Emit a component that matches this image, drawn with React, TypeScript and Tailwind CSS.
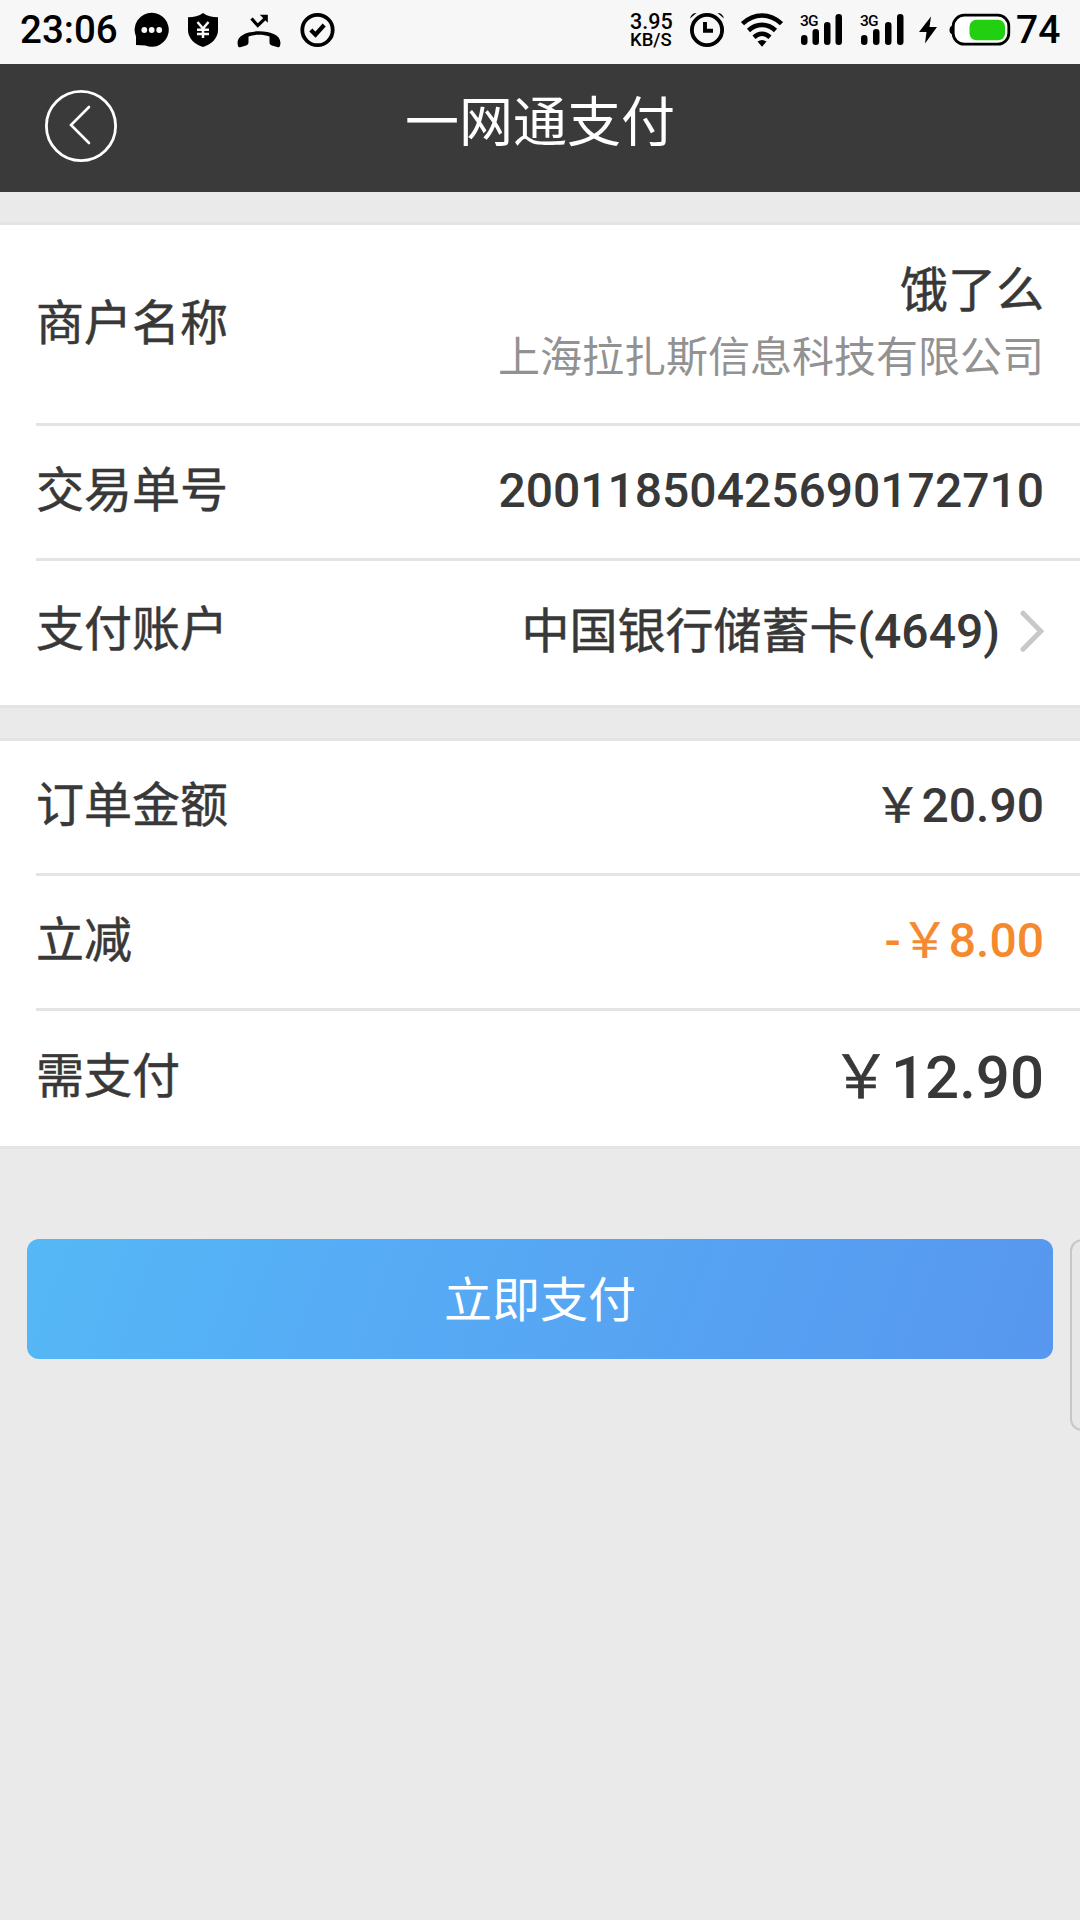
import { ReactNode } from "react";

function ChatIcon() {
  return (
    <svg width="36" height="36" viewBox="0 0 36 36">
      <path d="M18 .8a17 17 0 1 1-6.500 32.800L2 33V24.500A17 17 0 0 1 18 .8Z" fill="#000" />
      <circle cx="10.300" cy="18" r="2.900" fill="#f7f7f7" />
      <circle cx="17.700" cy="18" r="2.900" fill="#f7f7f7" />
      <circle cx="25.200" cy="18" r="2.900" fill="#f7f7f7" />
    </svg>
  );
}

function ShieldIcon() {
  return (
    <svg width="30" height="36" viewBox="0 0 30 36">
      <path
        d="M15 1C11 4 6 5.200 0 5.200V18c0 8 6 14 15 17 9-3 15-9 15-17V5.200C24 5.200 19 4 15 1Z"
        fill="#000"
      />
      <path
        d="m9.500 10 5.500 6.500L20.500 10M9 17.800h12M9 22h12M15 16v10"
        fill="none"
        stroke="#f7f7f7"
        strokeWidth="2.500"
      />
    </svg>
  );
}

function MissedCallIcon() {
  return (
    <svg width="44" height="36" viewBox="0 0 44 36">
      <path
        d="M.7 32.500C-.8 24 9 19.300 22 19.300S44.800 24 43.300 32.500c-.4 2.700-1.300 3.100-3.300 2.600l-5.200-1.600c-1.800-.6-2.300-1.600-2.300-3.400v-5.700C26 22.300 18 22.300 11.500 24.400v5.700c0 1.800-.5 2.800-2.300 3.400L4 35.100c-2 .5-2.900.1-3.300-2.600Z"
        fill="#000"
      />
      <path d="m14.500 6.500 6.300 7L28 6.700" fill="none" stroke="#000" strokeWidth="3.200" />
      <path d="M22.800 2.800h8v8Z" fill="#000" />
    </svg>
  );
}

function CheckIcon() {
  return (
    <svg width="36" height="36" viewBox="0 0 36 36" fill="none" stroke="#000">
      <circle cx="17.500" cy="18" r="15.200" strokeWidth="3.800" />
      <path d="m10.800 18 4.700 4.700 8.700-9.700" strokeWidth="4.200" />
    </svg>
  );
}

function AlarmIcon() {
  return (
    <svg width="36" height="36" viewBox="0 0 36 36" fill="none" stroke="#000">
      <circle cx="17" cy="18" r="15.100" strokeWidth="3.800" />
      <path d="M15 10v8.700h8" strokeWidth="3.900" />
      <path d="M0 6.500C.8 3 3 1 6.500 1L0 6.500ZM34 6.500C33.200 3 31 1 27.500 1l6.500 5.500Z" fill="#000" stroke="none" />
    </svg>
  );
}

function WifiIcon() {
  return (
    <svg width="42" height="36" viewBox="0 0 42 36" fill="none" stroke="#000" strokeWidth="4.600">
      <path d="M1.500 11.700C13 .7 29 .7 40.500 11.700" />
      <path d="M7.500 18.500C15.500 11 26.500 11 34.500 18.500" />
      <path d="M13 25.200C18 20.800 24 20.800 29 25.200" />
      <path d="M16.500 29.500q4.500-3 9 0L21 34.800Z" fill="#000" stroke="none" />
    </svg>
  );
}

function Signal({ pitch }: { pitch: number }) {
  return (
    <svg width="45" height="36" viewBox="0 0 45 36" fill="#000" className="overflow-visible">
      <text x="0" y="13.500" fontSize="15.500" fontWeight="500" textLength="18.500" fontFamily="Roboto, sans-serif">
        3G
      </text>
      <rect x="1" y="23" width="6.500" height="10" rx="3.200" />
      <rect x={1 + pitch} y="17" width="6.500" height="16" rx="3.200" />
      <rect x={1 + pitch * 2} y="10" width="6.500" height="23" rx="3.200" />
      <rect x={1 + pitch * 3} y="2" width="6.500" height="31" rx="3.200" />
    </svg>
  );
}

function Battery() {
  return (
    <svg width="62" height="36" viewBox="0 0 62 36">
      <path d="M4 13.500C1.500 14 .5 15.500.5 18S1.500 22 4 22.500Z" fill="#000" />
      <rect x="4.200" y="3.200" width="55.600" height="29" rx="11" fill="#fff" stroke="#000" strokeWidth="2.800" />
      <rect x="20.500" y="7.800" width="35.500" height="20.500" rx="7" fill="#23d011" />
    </svg>
  );
}

function StatusBar() {
  return (
    <div className="flex h-16 items-start bg-[#f7f7f7] pl-5 text-[39px] leading-none font-medium text-black">
      <span className="mt-[11px] w-[114px] text-[38.5px]">23:06</span>
      <div className="mt-3 flex">
        <ChatIcon />
        <span className="w-[18px]" />
        <ShieldIcon />
        <span className="w-[19px]" />
        <MissedCallIcon />
        <span className="w-[19px]" />
        <CheckIcon />
      </div>
      <div className="mt-3 ml-[294px] flex w-[60px] flex-col">
        <span className="text-[21.5px] leading-[19px]">3.95</span>
        <span className="text-[18.5px] leading-[19px]">KB/S</span>
      </div>
      <div className="mt-3 flex">
        <AlarmIcon />
        <span className="w-[15px]" />
        <WifiIcon />
        <span className="w-[17px]" />
        <Signal pitch={11.5} />
        <span className="w-[15px]" />
        <Signal pitch={12} />
        <span className="w-[14px]" />
        <svg width="18" height="36" viewBox="0 0 18 36">
          <path d="M12 4.500 0 20h7.500L6 31.500 18 15h-7.500Z" fill="#000" />
        </svg>
        <span className="w-3" />
        <Battery />
      </div>
      <span className="mt-[11px] ml-[5px]">74</span>
    </div>
  );
}

// Chinese glyphs sit between regular and medium weight
function Han({ children }: { children: ReactNode }) {
  return <span className="font-normal [-webkit-text-stroke:0.5px]">{children}</span>;
}

function Row({ label, height, children }: { label: string; height: string; children: ReactNode }) {
  return (
    <div className={`flex items-center justify-between pr-9 ${height}`}>
      <span>
        <Han>{label}</Han>
      </span>
      {children}
    </div>
  );
}

function Divider() {
  return <div className="h-[3px] bg-[#e4e4e7]" />;
}

export default function App() {
  return (
    <div className="relative h-[1920px] w-[1080px] overflow-hidden bg-[#eaeaea] font-['Roboto','Noto_Sans_CJK_SC',sans-serif]">
      <StatusBar />

      <header className="flex h-32 items-center bg-[#3a3a3a] pl-[45px]">
        <svg width="72" height="72" viewBox="0 0 72 72" fill="none" stroke="#fff" className="-mt-1">
          <circle cx="36" cy="36" r="34.600" strokeWidth="2.800" />
          <path d="M44 17 26 35l18 18" strokeWidth="2.600" strokeLinecap="round" />
        </svg>
        <h1 className="-mt-2 flex-1 pr-[117px] text-center text-[54px] leading-none font-normal text-white">
          一网通支付
        </h1>
      </header>

      <main className="text-5xl leading-[56px] font-medium text-[#383838]">
        <section className="mt-[30px] border-y-[3px] border-[#e4e4e7] bg-white pl-9">
          <Row label="商户名称" height="h-[198px]">
            <div className="text-right">
              <div className="leading-[67px]">
                <Han>饿了么</Han>
              </div>
              <div className="text-[42px] leading-[67px] font-normal text-[#929292]">
                上海拉扎斯信息科技有限公司
              </div>
            </div>
          </Row>
          <Divider />
          <Row label="交易单号" height="h-[132px] pb-0.5">
            <span>20011850425690172710</span>
          </Row>
          <Divider />
          <Row label="支付账户" height="h-36 pb-[7px]">
            <div className="flex items-center pt-[5px]">
              <span>
                <Han>中国银行储蓄卡</Han>(4649)
              </span>
              <svg width="24" height="46" viewBox="0 0 24 46" fill="none" className="ml-5">
                <path d="m3 4.200 17.800 18L3 40.200" stroke="#c8c8c8" strokeWidth="5" strokeLinecap="round" />
              </svg>
            </div>
          </Row>
        </section>

        <section className="mt-[30px] border-y-[3px] border-[#e4e4e7] bg-white pl-9">
          <Row label="订单金额" height="h-[132px] pb-0.5">
            <span>
              <Han>￥</Han>20.90
            </span>
          </Row>
          <Divider />
          <Row label="立减" height="h-[132px] pb-0.5">
            <span className="text-[#f5892d]">
              -<Han>￥</Han>8.00
            </span>
          </Row>
          <Divider />
          <Row label="需支付" height="h-[135px] pb-[3px]">
            <span className="pt-0.5 text-[60px]">
              <Han>￥</Han>12.90
            </span>
          </Row>
        </section>

        <button className="mt-[90px] ml-[27px] flex h-[120px] w-[1026px] items-center justify-center rounded-xl bg-[linear-gradient(110deg,#55b8f5_0%,#56adf5_30%,#5797ef_100%)] pt-1 font-normal text-white">
          立即支付
        </button>
      </main>

      {/* edge of the floating side panel */}
      <div className="absolute top-[1239px] -right-5 h-48 w-[30px] rounded-xl border-2 border-[#c6c6c6] bg-[#e7e7e7]" />
    </div>
  );
}
